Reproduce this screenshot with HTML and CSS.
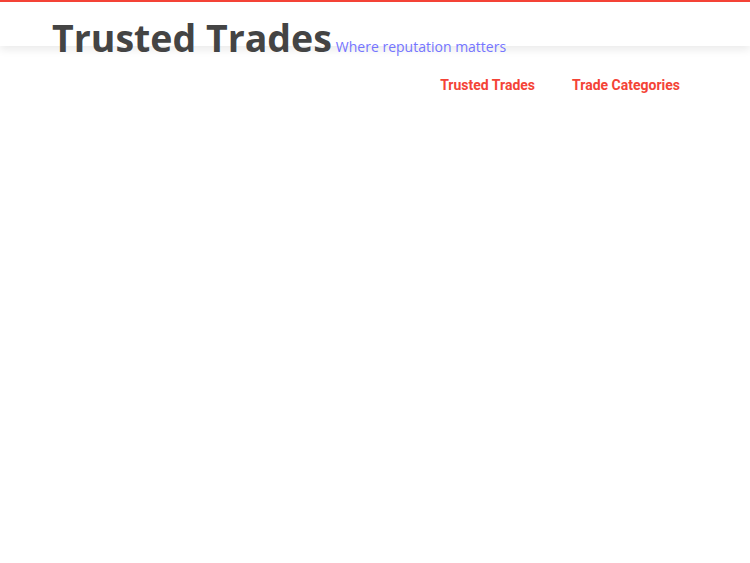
FILE: index.html
```html
<!DOCTYPE html>
<html>
  <head>
    <meta charset="utf-8" />
    <title>Trusted Trades</title>
    <link rel="stylesheet" href="styles.css">
  </head>
  <body>
    <div class="top-bar">
      <div class="brand">
        <h1 class="site-title">Trusted Trades</h1>
        <span class="tagline">Where reputation matters</span>
      </div>
    </div>
    <nav class="main-nav">
      <a href="#">Trusted Trades</a>
      <a href="#">Trade Categories</a>
    </nav>
  </body>
</html>
```

FILE: styles.css
```css
body {
  margin: 0;
  background: #fff;
  font-family: "Open Sans", sans-serif;
}

.top-bar {
  height: 44px;
  border-top: 2px solid #f44336;
  background: #fff;
  box-shadow: 0 4px 8px rgba(0, 0, 0, 0.08);
}
.brand {
  display: flex;
  align-items: baseline;
  gap: 4px;
  padding: 10px 0 0 52px;
}
.site-title {
  margin: 0;
  font-size: 37.5px;
  font-weight: 700;
  line-height: 51px;
  color: #444;
}
.tagline {
  font-size: 14px;
  color: #7575ff;
}

.main-nav {
  display: flex;
  justify-content: flex-end;
  gap: 37px;
  padding: 31px 70px 0 0;
}
.main-nav a {
  font-family: Roboto, "Liberation Sans", Arial, sans-serif;
  font-size: 14px;
  font-weight: 700;
  color: #f44336;
  text-decoration: none;
}
```
